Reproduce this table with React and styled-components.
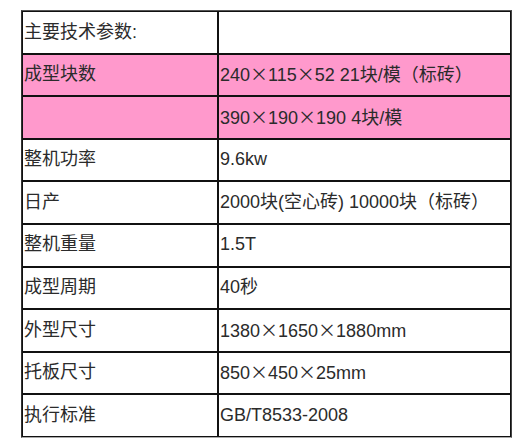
import React from 'react'
import styled, { createGlobalStyle } from 'styled-components'

const GlobalStyle = createGlobalStyle`
  body {
    margin: 0;
    background: #fff;
  }
`

const Wrapper = styled.div`
  padding: 10px 0 0 21px;
`

const Table = styled.table`
  width: 491px;
  border-collapse: separate;
  border-spacing: 0;
  border-top: 1px solid #555;
  border-right: 1px solid #444;
  border-bottom: 1px solid #aaa;
  border-left: 1px solid #333;
  table-layout: fixed;
  font-family: 'Liberation Sans', 'Noto Sans CJK SC', sans-serif;
  font-size: 18px;
  color: #2b2b2b;
`

const Row = styled.tr`
  height: 42.6px;
  background-color: ${(p) => (p.highlight ? '#ff99cc' : '#fff')};
`

const Cell = styled.td`
  border: 1px solid #111;
  padding: 0 0 0 1px;
  line-height: 1.2;
  vertical-align: middle;
  white-space: nowrap;
  overflow: hidden;
`

const Times = styled.span`
  font-family: 'Noto Sans CJK SC', sans-serif;
`

// 把 × 换成全角字体显示
const withTimes = (text) =>
  text.split('×').flatMap((part, i) =>
    i === 0 ? [part] : [<Times key={i}>×</Times>, part]
  )

const rows = [
  ['主要技术参数:', ''],
  ['成型块数', '240×115×52 21块/模（标砖）', true],
  ['', '390×190×190 4块/模', true],
  ['整机功率', '9.6kw'],
  ['日产', '2000块(空心砖) 10000块（标砖）'],
  ['整机重量', '1.5T'],
  ['成型周期', '40秒'],
  ['外型尺寸', '1380×1650×1880mm'],
  ['托板尺寸', '850×450×25mm'],
  ['执行标准', 'GB/T8533-2008'],
]

const App = () => {
  return (
    <Wrapper>
      <GlobalStyle />
      <Table>
        <colgroup>
          <col style={{ width: 196 }} />
          <col />
        </colgroup>
        <tbody>
          {rows.map(([label, value, highlight], i) => (
            <Row key={i} highlight={highlight}>
              <Cell>{label}</Cell>
              <Cell>{withTimes(value)}</Cell>
            </Row>
          ))}
        </tbody>
      </Table>
    </Wrapper>
  )
}

export default App
